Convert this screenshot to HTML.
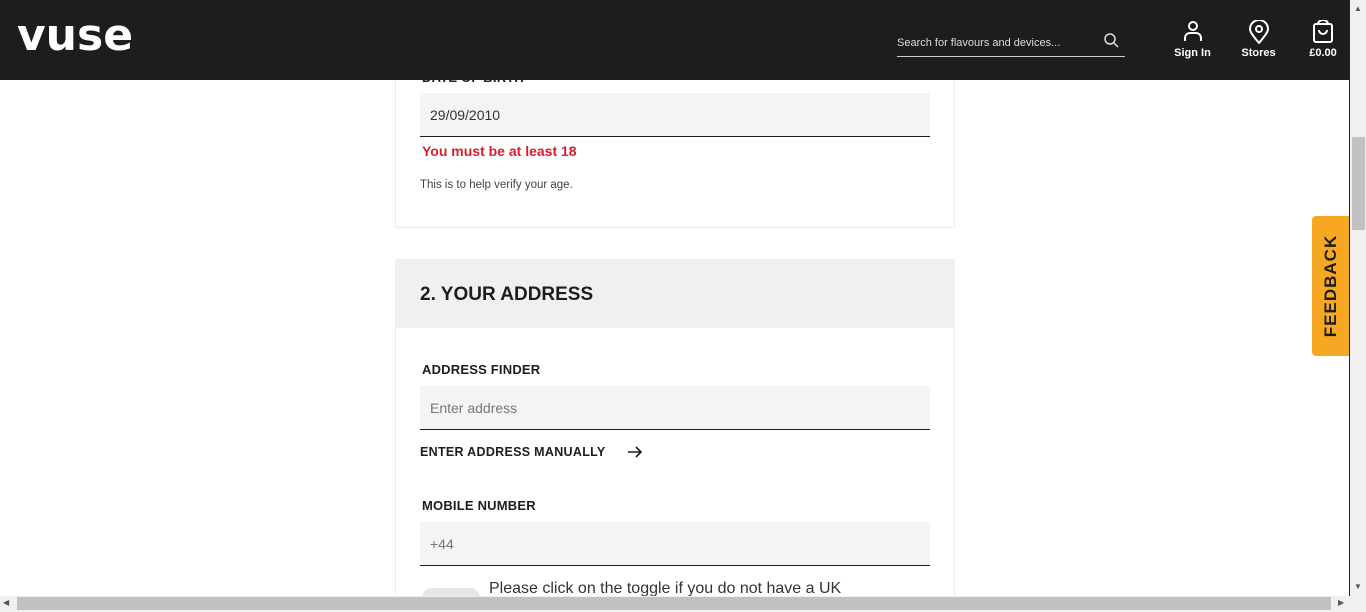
<!DOCTYPE html>
<html style="overflow:hidden;width:1366px;height:612px"><head><style>
*{box-sizing:border-box;margin:0;padding:0}
body{width:1366px;height:612px;overflow:hidden;background:#fff;font-family:"Liberation Sans",sans-serif;position:relative;color:#1d1d1b}
.hdr{position:absolute;left:0;top:0;width:1349px;height:80px;background:#1d1d1b;color:#fff;z-index:5}
.logo{position:absolute;left:17px;top:14px;font-size:44px;font-weight:bold;letter-spacing:0px;line-height:44px;font-family:"DejaVu Sans",sans-serif}
.search{position:absolute;left:897px;top:30px;width:228px;height:27px;border-bottom:1px solid #ccc;font-size:11px;color:#ddd;padding-top:7px}
.ic{position:absolute;top:20px;text-align:center;font-size:11px;font-weight:bold;color:#fff}
.card{position:absolute;left:395px;width:560px;border:1px solid #ececec}
.field{position:absolute;left:420px;width:510px;height:44px;background:#f4f4f4;border-bottom:1px solid #1d1d1b;font-size:14px;padding:14px 10px;color:#333}
.lbl{position:absolute;left:422px;font-size:13px;font-weight:bold;letter-spacing:.2px}
.vs{position:absolute;left:1349px;top:0;width:17px;height:596px;background:#f0f0f0;border-left:1px solid #222;z-index:6}
.hs{position:absolute;left:0;top:596px;width:1366px;height:16px;background:#f0f0f0;z-index:6}
</style></head><body>
<div class="hdr">
<div class="logo">vuse</div>
<div class="search">Search for flavours and devices...</div>
<svg style="position:absolute;left:1103px;top:32px" width="16" height="16" viewBox="0 0 16 16"><circle cx="7" cy="7" r="5" stroke="#ddd" stroke-width="1.5" fill="none"/><path d="M11 11l4 4" stroke="#ddd" stroke-width="1.5"/></svg>
<div class="ic" style="left:1170px;width:45px"><svg width="22" height="22" viewBox="0 0 22 22"><circle cx="11" cy="6" r="4" stroke="#fff" stroke-width="2" fill="none"/><path d="M3 21v-3a5 5 0 0 1 5-5h6a5 5 0 0 1 5 5v3" stroke="#fff" stroke-width="2" fill="none"/></svg><div style="margin-top:2px">Sign In</div></div>
<div class="ic" style="left:1236px;width:45px"><svg width="22" height="24" viewBox="0 0 22 24"><path d="M11 23C5 16 2 12 2 9a9 9 0 0 1 18 0c0 3-3 7-9 14z" stroke="#fff" stroke-width="2" fill="none"/><circle cx="11" cy="9" r="3" stroke="#fff" stroke-width="2" fill="none"/></svg><div>Stores</div></div>
<div class="ic" style="left:1302px;width:42px"><svg width="22" height="24" viewBox="0 0 22 24"><rect x="2" y="4" width="18" height="18" rx="2" stroke="#fff" stroke-width="2" fill="none"/><path d="M6 4a5 4 0 0 1 10 0M7 10a4 4 0 0 0 8 0" stroke="#fff" stroke-width="2" fill="none"/></svg><div>£0.00</div></div>
</div>
<div class="card" style="top:60px;height:168px;border-top:none"></div>
<div class="lbl" style="top:70px">DATE OF BIRTH</div>
<div class="field" style="top:93px">29/09/2010</div>
<div style="position:absolute;left:422px;top:143px;font-size:14px;font-weight:bold;color:#d21f2b">You must be at least 18</div>
<div style="position:absolute;left:420px;top:179px;font-size:11.5px;color:#444">This is to help verify your age.</div>
<div class="card" style="top:259px;height:340px"></div>
<div style="position:absolute;left:395px;top:259px;width:560px;height:69px;background:#f0f0f0;font-size:19px;font-weight:bold;padding:25px 25px">2. YOUR ADDRESS</div>
<div class="lbl" style="top:362px">ADDRESS FINDER</div>
<div class="field" style="top:386px;color:#777">Enter address</div>
<div style="position:absolute;left:420px;top:445px;font-size:12.5px;font-weight:bold;letter-spacing:.3px">ENTER ADDRESS MANUALLY</div>
<svg style="position:absolute;left:627px;top:444px" width="16" height="16" viewBox="0 0 16 16"><path d="M1 8h13M9 3l5 5-5 5" stroke="#1d1d1b" stroke-width="1.6" fill="none"/></svg>
<div class="lbl" style="top:498px">MOBILE NUMBER</div>
<div class="field" style="top:522px;color:#777">+44</div>
<div style="position:absolute;left:422px;top:588px;width:58px;height:20px;border-radius:10px;background:#e6e6e6"></div>
<div style="position:absolute;left:489px;top:580px;font-size:16px;color:#333">Please click on the toggle if you do not have a UK</div>
<div style="position:absolute;left:1312px;top:216px;width:37px;height:140px;background:#f7a823;border-radius:4px 0 0 4px"></div>
<div style="position:absolute;left:1331px;top:286px;transform:translate(-50%,-50%) rotate(-90deg);font-size:17px;font-weight:bold;letter-spacing:1px;white-space:nowrap">FEEDBACK</div>
<div class="vs"><div style="position:absolute;left:2px;top:137px;width:13px;height:93px;background:#c1c1c1"></div><div style="position:absolute;left:4px;top:4px;font-size:8px;color:#555">▲</div><div style="position:absolute;left:4px;top:582px;font-size:8px;color:#555">▼</div></div>
<div class="hs"><div style="position:absolute;left:17px;top:1px;width:1314px;height:13px;background:#c1c1c1"></div><div style="position:absolute;left:3px;top:2px;font-size:8px;color:#555">◀</div><div style="position:absolute;left:1338px;top:2px;font-size:8px;color:#555">▶</div></div>
</body></html>
